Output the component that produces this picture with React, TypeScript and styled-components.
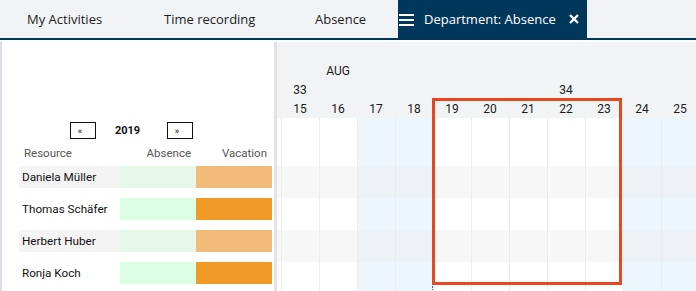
import * as React from 'react';
import styled, { createGlobalStyle } from 'styled-components';

const GlobalStyle = createGlobalStyle`
    html, body {
        margin: 0;
        padding: 0;
        background: #ffffff;
    }
    body {
        font-family: Roboto, "Liberation Sans", sans-serif;
        color: #222;
    }
`

const NAVY = '#02375c';
const COL = 38;

const Page = styled.div`
    width: 696px;
    height: 291px;
    overflow: hidden;
    display: flex;
    flex-direction: column;
`

const NavBar = styled.div`
    height: 38px;
    display: flex;
    align-items: stretch;
    background: #f2f3f5;
    border-bottom: 2px solid ${NAVY};
    font-family: "Open Sans", "Noto Sans", sans-serif;
    font-size: 13px;
`

const Tab = styled.div<{ $width: number; $active?: boolean }>`
    width: ${p => p.$width}px;
    box-sizing: border-box;
    padding-left: ${p => p.$active ? 1 : 27}px;
    display: flex;
    align-items: center;
    gap: 10px;
    white-space: nowrap;
    color: ${p => p.$active ? '#fff' : '#1d1d1d'};
    background: ${p => p.$active ? NAVY : 'transparent'};
`

const TabLabel = styled.span`
    flex: 1;
`

const CloseIcon = styled.svg`
    margin-right: 8px;
`

const Main = styled.div`
    flex: 1;
    display: flex;
    margin-top: 2px;
    min-height: 0;
`

const LeftPanel = styled.div`
    width: 255px;
    flex-shrink: 0;
    border-left: 2px solid #dcdbe9;
    padding-top: 80px;
    padding-left: 17px;
    box-sizing: content-box;
    font-size: 12px;
`

const YearNav = styled.div`
    display: flex;
    align-items: center;
    height: 17px;
    padding-left: 51px;
`

const YearButton = styled.div`
    width: 26px;
    height: 17px;
    box-sizing: border-box;
    border: 1px solid #111;
    display: flex;
    align-items: center;
    justify-content: center;
    padding-right: 6px;
    font-size: 9px;
    font-weight: 700;
    color: #333;
`

const YearText = styled.div`
    width: 71px;
    padding-right: 8px;
    box-sizing: border-box;
    text-align: center;
    font-weight: 700;
    font-size: 11px;
    color: #111;
`

const ResRow = styled.div`
    display: grid;
    grid-template-columns: 101px 76px 76px;
`

const HeadRow = styled(ResRow)`
    height: 27px;
    align-items: center;
    color: #555;
    font-size: 11.5px;
    padding-top: 1px;
    box-sizing: border-box;
`

const HeadCell = styled.div<{ $right?: boolean }>`
    text-align: ${p => p.$right ? 'right' : 'left'};
    padding: ${p => p.$right ? '0 5px 0 0' : '0 0 0 5px'};
`

const DataRow = styled(ResRow)`
    height: 22px;
    margin-bottom: 10px;
`

const NameCell = styled.div<{ $alt: boolean }>`
    background: ${p => p.$alt ? '#f4f4f4' : '#ffffff'};
    display: flex;
    align-items: center;
    padding-left: 3px;
    font-size: 11.7px;
    white-space: nowrap;
    color: #111;
`

const AbsenceCell = styled.div<{ $alt: boolean }>`
    background: ${p => p.$alt ? '#e4f7e9' : '#dbfde3'};
`

const VacationCell = styled.div<{ $alt: boolean }>`
    background: ${p => p.$alt ? '#f0bb76' : '#f09a28'};
`

const Timeline = styled.div`
    position: relative;
    flex: 1;
    min-width: 0;
    border-left: 3px solid #e5e0ea;
    overflow: hidden;
`

const TimeHeader = styled.div`
    display: grid;
    grid-template-columns: 4px repeat(11, ${COL}px);
    grid-template-rows: 19px 19px 19px 19px;
    background: #f2f3f5;
    font-size: 12px;
    color: #1a1a1a;
`

const HeadLabel = styled.div<{ $col: number; $row: number }>`
    grid-column: ${p => p.$col} / span 1;
    grid-row: ${p => p.$row};
    display: flex;
    align-items: center;
    justify-content: center;
    white-space: nowrap;
`

const BodyRow = styled.div<{ $alt: boolean; $height: number }>`
    display: grid;
    grid-template-columns: 4px repeat(11, ${COL}px);
    height: ${p => p.$height}px;
    background: ${p => p.$alt ? '#f7f7f7' : '#ffffff'};
`

const DayCell = styled.div<{ $weekend: boolean; $alt: boolean }>`
    border-left: 1px solid #ececec;
    background: ${p => p.$weekend ? (p.$alt ? '#edf2f7' : '#eef6fd') : 'transparent'};
`

const Spacer = styled.div``

const Selection = styled.div`
    position: absolute;
    left: 155px;
    top: 56px;
    width: 190px;
    height: 187px;
    box-sizing: border-box;
    border: 3px solid #e8461f;
`

const TodayMarker = styled.div`
    position: absolute;
    left: 155px;
    top: 244px;
    height: 8px;
    border-left: 1px dotted #4d64a3;
`

const days = [15, 16, 17, 18, 19, 20, 21, 22, 23, 24, 25];
const weekends = [17, 18, 24, 25];

const people = ['Daniela Müller', 'Thomas Schäfer', 'Herbert Huber', 'Ronja Koch'];

function Hamburger() {
    return (
        <svg width="15" height="14" viewBox="0 0 15 14">
            <rect x="0" y="2" width="15" height="2" fill="#fff" />
            <rect x="0" y="7" width="15" height="2" fill="#fff" />
            <rect x="0" y="12" width="15" height="2" fill="#fff" />
        </svg>
    );
}

function DayCells({ alt }: { alt: boolean }) {
    return (
        <>
            <Spacer />
            {days.map(d => (
                <DayCell key={d} $weekend={weekends.includes(d)} $alt={alt} />
            ))}
        </>
    );
}

export default function App() {
    return (
        <Page>
            <GlobalStyle />
            <NavBar>
                <Tab $width={137}>My Activities</Tab>
                <Tab $width={151}>Time recording</Tab>
                <Tab $width={110}>Absence</Tab>
                <Tab $width={189} $active>
                    <Hamburger />
                    <TabLabel>Department: Absence</TabLabel>
                    <CloseIcon width="10" height="10" viewBox="0 0 10 10">
                        <path d="M1 1 L9 9 M9 1 L1 9" stroke="#fff" strokeWidth="2.4" />
                    </CloseIcon>
                </Tab>
            </NavBar>
            <Main>
                <LeftPanel>
                    <YearNav>
                        <YearButton>«</YearButton>
                        <YearText>2019</YearText>
                        <YearButton>»</YearButton>
                    </YearNav>
                    <HeadRow>
                        <HeadCell>Resource</HeadCell>
                        <HeadCell $right>Absence</HeadCell>
                        <HeadCell $right>Vacation</HeadCell>
                    </HeadRow>
                    {people.map((name, i) => (
                        <DataRow key={name}>
                            <NameCell $alt={i % 2 === 0}>{name}</NameCell>
                            <AbsenceCell $alt={i % 2 === 0} />
                            <VacationCell $alt={i % 2 === 0} />
                        </DataRow>
                    ))}
                </LeftPanel>
                <Timeline>
                    <TimeHeader>
                        <HeadLabel $col={3} $row={2}>AUG</HeadLabel>
                        <HeadLabel $col={2} $row={3}>33</HeadLabel>
                        <HeadLabel $col={9} $row={3}>34</HeadLabel>
                        {days.map((d, i) => (
                            <HeadLabel key={d} $col={i + 2} $row={4}>{d}</HeadLabel>
                        ))}
                    </TimeHeader>
                    <BodyRow $alt={false} $height={48}><DayCells alt={false} /></BodyRow>
                    {people.map((name, i) => (
                        <BodyRow key={name} $alt={i % 2 === 0} $height={32}>
                            <DayCells alt={i % 2 === 0} />
                        </BodyRow>
                    ))}
                    <Selection />
                    <TodayMarker />
                </Timeline>
            </Main>
        </Page>
    );
}
